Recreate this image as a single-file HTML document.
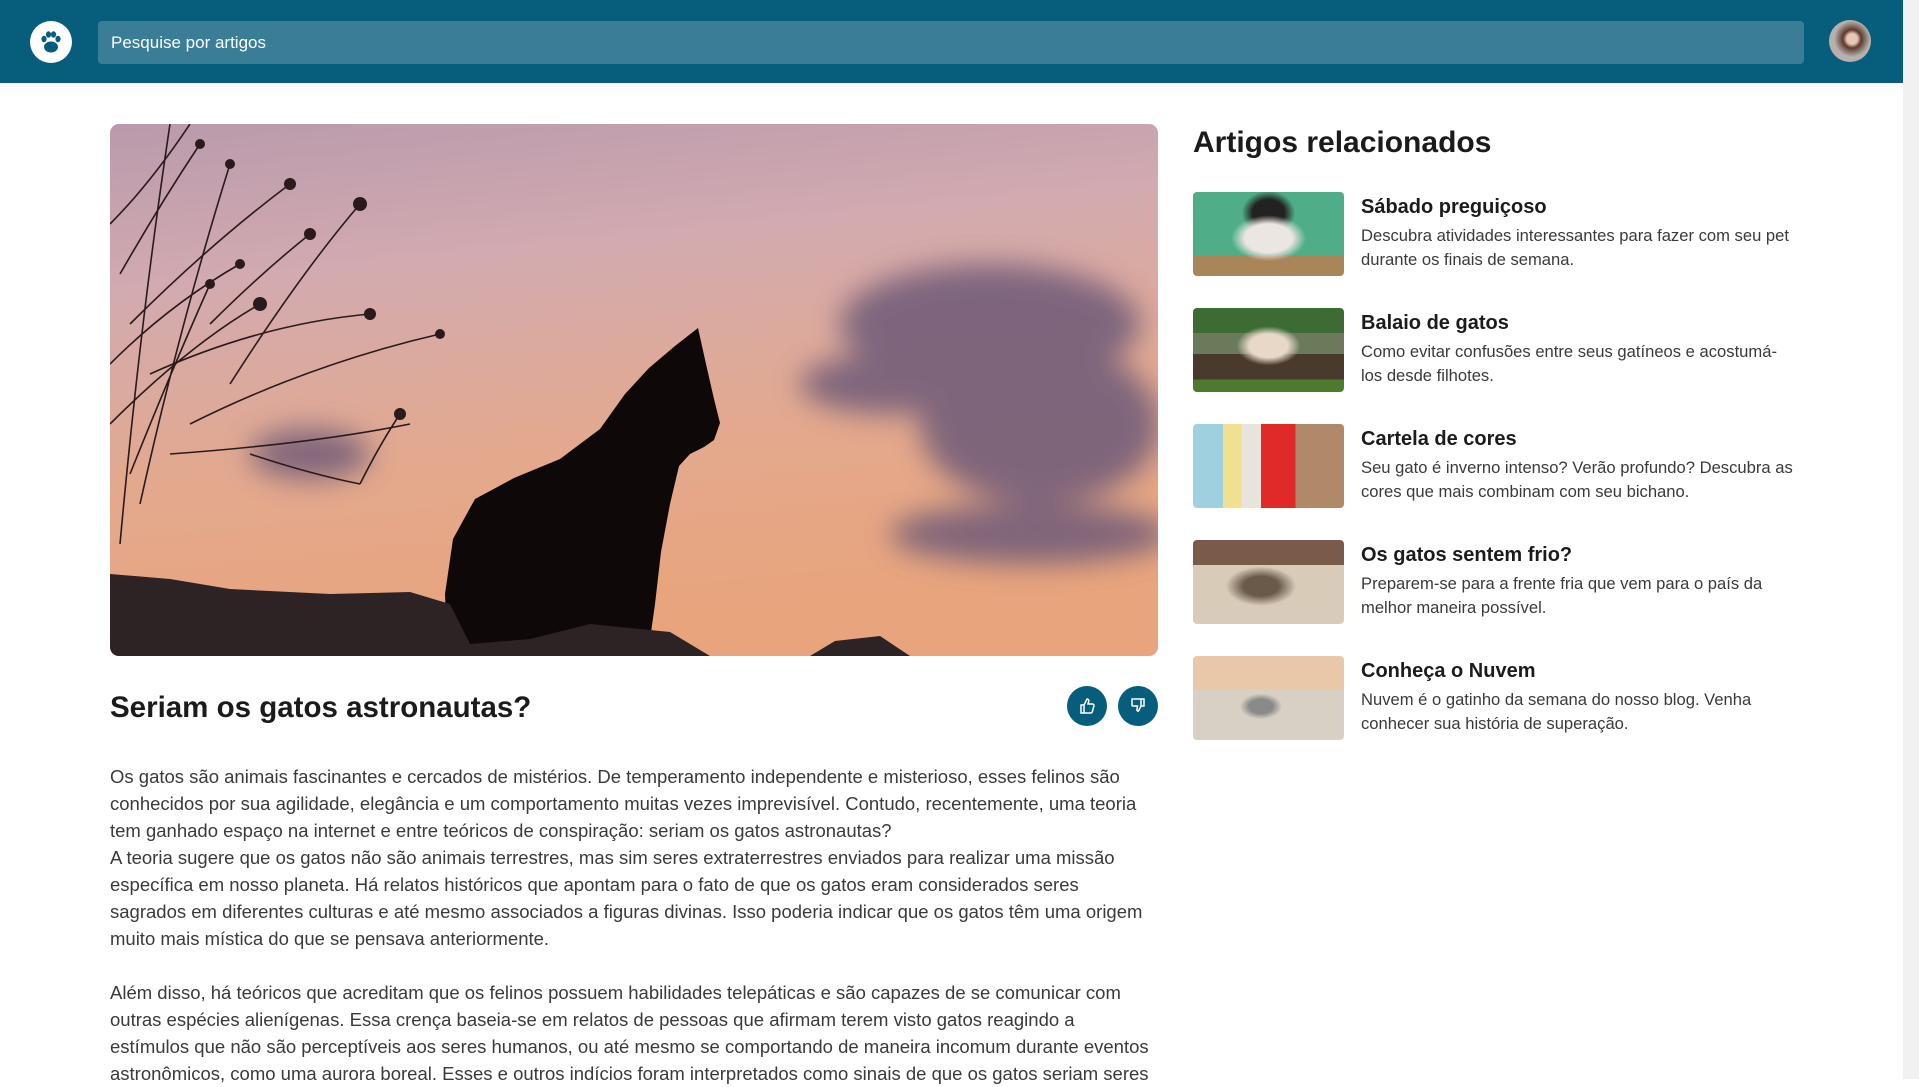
<!DOCTYPE html>
<html><head><meta charset="utf-8"><style>
*{margin:0;padding:0;box-sizing:border-box}
body{width:1919px;height:1079px;overflow:hidden;background:#fff;font-family:"Liberation Sans",sans-serif;position:relative;color:#222}
.hdr{position:absolute;left:0;top:0;width:1903px;height:83px;background:#075e7c}
.logo{position:absolute;left:30px;top:21px;width:42px;height:42px;border-radius:50%;background:#fff}
.search{position:absolute;left:98px;top:21px;width:1706px;height:43px;border-radius:4px;background:#3a7d97;color:#fff;font-size:17px;line-height:43px;padding-left:13px}
.avatar{position:absolute;left:1829px;top:20px;width:42px;height:42px;border-radius:50%;background:radial-gradient(circle at 55% 45%,#e8c6b5 0 16%,#5a3a2c 28%,#b8b0ad 55%)}
.sb{position:absolute;left:1903px;top:0;width:16px;height:1079px;background:#f1f1f1}
.thumb{position:absolute;left:1905px;top:17px;width:12px;height:903px;background:#c1c1c1}
.hero{position:absolute;left:110px;top:124px;width:1048px;height:532px;border-radius:9px;overflow:hidden}
h1{position:absolute;left:110px;top:691px;font-size:29.5px;font-weight:600;color:#1b1b1b}
.btn{position:absolute;top:686px;width:40px;height:40px;border-radius:50%;background:#075e7c}
.body{position:absolute;left:110px;top:763px;font-size:18.5px;line-height:27px;color:#3a3a3a;white-space:nowrap}
h2{position:absolute;left:1193px;top:126px;font-size:30px;font-weight:600;color:#1b1b1b}
.it{position:absolute;left:1193px;width:600px;height:84px}
.it .im{position:absolute;left:0;top:0;width:151px;height:84px;border-radius:4px}
.it h3{position:absolute;left:168px;top:4px;font-size:20px;font-weight:600;color:#1b1b1b}
.it p{position:absolute;left:168px;top:32px;font-size:16.6px;line-height:24px;color:#3a3a3a;white-space:nowrap}
</style></head><body>
<div class="hdr">
 <div class="logo"><svg width="42" height="42" viewBox="0 0 42 42"><g fill="#075e7c"><ellipse cx="21" cy="26" rx="7" ry="5.5"/><ellipse cx="14" cy="18" rx="2.6" ry="3.2"/><ellipse cx="18.5" cy="13.5" rx="2.6" ry="3.2"/><ellipse cx="23.5" cy="13.5" rx="2.6" ry="3.2"/><ellipse cx="28" cy="18" rx="2.6" ry="3.2"/></g></svg></div>
 <div class="search">Pesquise por artigos</div>
 <div class="avatar"></div>
</div>
<div class="sb"><div class="thumb"></div></div>
<div class="hero"><svg width="1048" height="532" viewBox="0 0 1048 532">
<defs><linearGradient id="sky" x1="0" y1="0" x2="0.2" y2="1"><stop offset="0" stop-color="#b99aac"/><stop offset=".3" stop-color="#d2aab0"/><stop offset=".65" stop-color="#e3a98f"/><stop offset="1" stop-color="#e8a47c"/></linearGradient>
<filter id="bl"><feGaussianBlur stdDeviation="14"/></filter></defs>
<rect width="1048" height="532" fill="url(#sky)"/>
<g filter="url(#bl)" fill="#6e5a78" opacity=".85"><ellipse cx="880" cy="200" rx="150" ry="60"/><ellipse cx="930" cy="300" rx="120" ry="80"/><ellipse cx="780" cy="260" rx="90" ry="30"/><ellipse cx="920" cy="410" rx="140" ry="30"/><ellipse cx="200" cy="330" rx="60" ry="25"/></g>
<g stroke="#2a1a1c" stroke-width="1.6" fill="none">
<path d="M10 420 Q30 200 60 0 M30 380 Q70 200 120 40 M0 300 Q80 220 150 180 M40 250 Q150 200 260 190 M60 330 Q200 320 300 300 M80 300 Q200 240 330 210 M120 260 Q190 150 250 80 M20 200 Q100 120 180 60 M140 330 Q200 350 250 360 M250 360 Q270 320 290 290 M10 150 Q50 80 90 20 M100 200 Q150 150 200 110 M0 100 Q40 60 80 0 M20 350 Q60 250 100 160 M0 240 Q60 180 130 140"/></g>
<g fill="#2a1a1c"><circle cx="250" cy="80" r="7"/><circle cx="290" cy="290" r="6"/><circle cx="260" cy="190" r="6"/><circle cx="330" cy="210" r="5"/><circle cx="180" cy="60" r="6"/><circle cx="150" cy="180" r="7"/><circle cx="120" cy="40" r="5"/><circle cx="200" cy="110" r="6"/><circle cx="90" cy="20" r="5"/><circle cx="130" cy="140" r="5"/><circle cx="100" cy="160" r="5"/></g>
<path fill="#0e0808" d="M588 204 L596 240 L604 275 L610 299 L604 316 L594 323 L580 330 L569 342 L560 380 L551 428 L545 480 L539 523 L337 523 L335 470 L343 415 L365 375 L404 354 L450 335 L490 305 L515 270 L539 244 L565 222 Z"/>
<path fill="#2d2224" d="M0 450 L60 455 L120 465 L220 470 L300 468 L340 480 L360 520 L420 515 L480 500 L560 508 L600 532 L0 532 Z M700 532 L725 517 L770 512 L800 532 Z"/>
</svg></div>
<h1>Seriam os gatos astronautas?</h1>
<div class="btn" style="left:1067px"><svg width="40" height="40" viewBox="0 0 40 40" fill="none" stroke="#fff" stroke-width="1.5"><path d="M14 19h3v8h-3z M17 19l3-6c1.5 0 2 1 1.7 2.5L21 18h4.5c1 0 1.7.9 1.4 1.9l-1.5 5.6c-.2.8-.9 1.5-1.8 1.5H17"/></svg></div>
<div class="btn" style="left:1118px"><svg width="40" height="40" viewBox="0 0 40 40" fill="none" stroke="#fff" stroke-width="1.5"><path d="M14 13h12v7h-3l-2.5 5c-1 .3-1.8-.5-1.5-1.5L19.5 20H15c-.6 0-1-.5-1-1z M23 13v7"/></svg></div>
<div class="body">Os gatos são animais fascinantes e cercados de mistérios. De temperamento independente e misterioso, esses felinos são<br>conhecidos por sua agilidade, elegância e um comportamento muitas vezes imprevisível. Contudo, recentemente, uma teoria<br>tem ganhado espaço na internet e entre teóricos de conspiração: seriam os gatos astronautas?<br>A teoria sugere que os gatos não são animais terrestres, mas sim seres extraterrestres enviados para realizar uma missão<br>específica em nosso planeta. Há relatos históricos que apontam para o fato de que os gatos eram considerados seres<br>sagrados em diferentes culturas e até mesmo associados a figuras divinas. Isso poderia indicar que os gatos têm uma origem<br>muito mais mística do que se pensava anteriormente.<br><br>Além disso, há teóricos que acreditam que os felinos possuem habilidades telepáticas e são capazes de se comunicar com<br>outras espécies alienígenas. Essa crença baseia-se em relatos de pessoas que afirmam terem visto gatos reagindo a<br>estímulos que não são perceptíveis aos seres humanos, ou até mesmo se comportando de maneira incomum durante eventos<br>astronômicos, como uma aurora boreal. Esses e outros indícios foram interpretados como sinais de que os gatos seriam seres</div>
<h2>Artigos relacionados</h2>
<div class="it" style="top:192px"><div class="im" style="background:radial-gradient(ellipse at 50% 55%,#ece6e2 0 22%,transparent 35%),radial-gradient(ellipse at 50% 25%,#222 0 15%,transparent 25%),linear-gradient(180deg,#4fae87 0 75%,#a8865a 75%)"></div><h3>Sábado preguiçoso</h3><p>Descubra atividades interessantes para fazer com seu pet<br>durante os finais de semana.</p></div>
<div class="it" style="top:308px"><div class="im" style="background:radial-gradient(ellipse at 50% 45%,#e8d8c8 0 18%,transparent 30%),linear-gradient(180deg,#3c6b34 0 30%,#6a7a5a 30% 55%,#4a3a2c 55% 85%,#4d7a2e 85%)"></div><h3>Balaio de gatos</h3><p>Como evitar confusões entre seus gatíneos e acostumá-<br>los desde filhotes.</p></div>
<div class="it" style="top:424px"><div class="im" style="background:linear-gradient(90deg,#9fd0e0 0 20%,#f0e090 20% 32%,#e8e4dc 32% 45%,#e02a2a 45% 68%,#b08a68 68%)"></div><h3>Cartela de cores</h3><p>Seu gato é inverno intenso? Verão profundo? Descubra as<br>cores que mais combinam com seu bichano.</p></div>
<div class="it" style="top:540px"><div class="im" style="background:radial-gradient(ellipse at 45% 55%,#6a5a4a 0 15%,transparent 30%),linear-gradient(180deg,#7a5a48 0 30%,#d8cbb8 30%)"></div><h3>Os gatos sentem frio?</h3><p>Preparem-se para a frente fria que vem para o país da<br>melhor maneira possível.</p></div>
<div class="it" style="top:656px"><div class="im" style="background:radial-gradient(ellipse at 45% 60%,#8a8a8a 0 10%,transparent 18%),linear-gradient(180deg,#e8c8a8 0 40%,#d8d0c4 40%)"></div><h3>Conheça o Nuvem</h3><p>Nuvem é o gatinho da semana do nosso blog. Venha<br>conhecer sua história de superação.</p></div>
</body></html>
